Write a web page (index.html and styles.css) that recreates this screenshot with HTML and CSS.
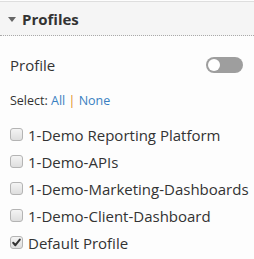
FILE: index.html
```html
<!DOCTYPE html>
<html>
<head>
<meta charset="utf-8">
<link rel="stylesheet" href="styles.css">
</head>
<body>
<div class="panel">
  <div class="header">
    <span class="caret"></span>
    <span class="title">Profiles</span>
  </div>
  <div class="body">
    <div class="toggle-row">
      <span class="label">Profile</span>
      <span class="switch"><span class="knob"></span></span>
    </div>
    <div class="select">Select: <a class="link">All</a> <span class="sep">|</span> <a class="link">None</a></div>
    <ul class="list">
      <li><span class="cb"></span>1-Demo Reporting Platform</li>
      <li><span class="cb"></span>1-Demo-APIs</li>
      <li><span class="cb"></span>1-Demo-Marketing-Dashboards</li>
      <li><span class="cb"></span>1-Demo-Client-Dashboard</li>
      <li><span class="cb checked"><svg viewBox="0 0 13 13" width="13" height="13"><path d="M3.2 6.8 L5.4 9.2 L9.8 3.6" fill="none" stroke="#333" stroke-width="2" stroke-linecap="round" stroke-linejoin="round"/></svg></span>Default Profile</li>
    </ul>
  </div>
</div>
</body>
</html>
```
FILE: styles.css
```css
html, body {
  margin: 0;
  padding: 0;
  background: #fdfdfd;
}
body {
  font-family: "Open Sans", "Liberation Sans", sans-serif;
  color: #333;
}
.panel {
  padding-top: 1px;
}
.header {
  height: 33px;
  border-top: 1px solid #dedede;
  border-bottom: 1px dotted #aaa;
  background: #f5f5f5;
  display: flex;
  align-items: center;
  padding-left: 8px;
}
.caret {
  width: 0;
  height: 0;
  border-left: 4px solid transparent;
  border-right: 4px solid transparent;
  border-top: 5px solid #666;
  margin-right: 6px;
  margin-top: 1px;
}
.title {
  font-weight: bold;
  font-size: 15px;
  color: #333;
}
.body {
  padding: 0 10px;
}
.toggle-row {
  display: flex;
  justify-content: space-between;
  align-items: center;
  margin-top: 18px;
  height: 22px;
}
.label {
  font-size: 15px;
}
.switch {
  width: 37px;
  height: 16px;
  border-radius: 8px;
  background: #9e9e9e;
  position: relative;
  margin-right: 1px;
}
.knob {
  position: absolute;
  left: 2px;
  top: 2px;
  width: 12px;
  height: 12px;
  border-radius: 50%;
  background: #fff;
}
.select {
  margin-top: 16px;
  font-size: 12.5px;
  line-height: 17px;
  color: #333;
}
.link {
  color: #3a7fc1;
}
.sep {
  color: #e08a1e;
}
.list {
  list-style: none;
  margin: 12px 0 0;
  padding: 0;
}
.list li {
  display: flex;
  align-items: center;
  height: 27px;
  font-size: 15px;
  white-space: nowrap;
}
.cb {
  width: 11px;
  height: 11px;
  border: 1px solid #b4b4b4;
  border-radius: 3px;
  background: linear-gradient(#f4f4f4, #dedede);
  margin-right: 5px;
  position: relative;
  flex: none;
}
.cb svg {
  position: absolute;
  left: -1px;
  top: -1px;
}
```
